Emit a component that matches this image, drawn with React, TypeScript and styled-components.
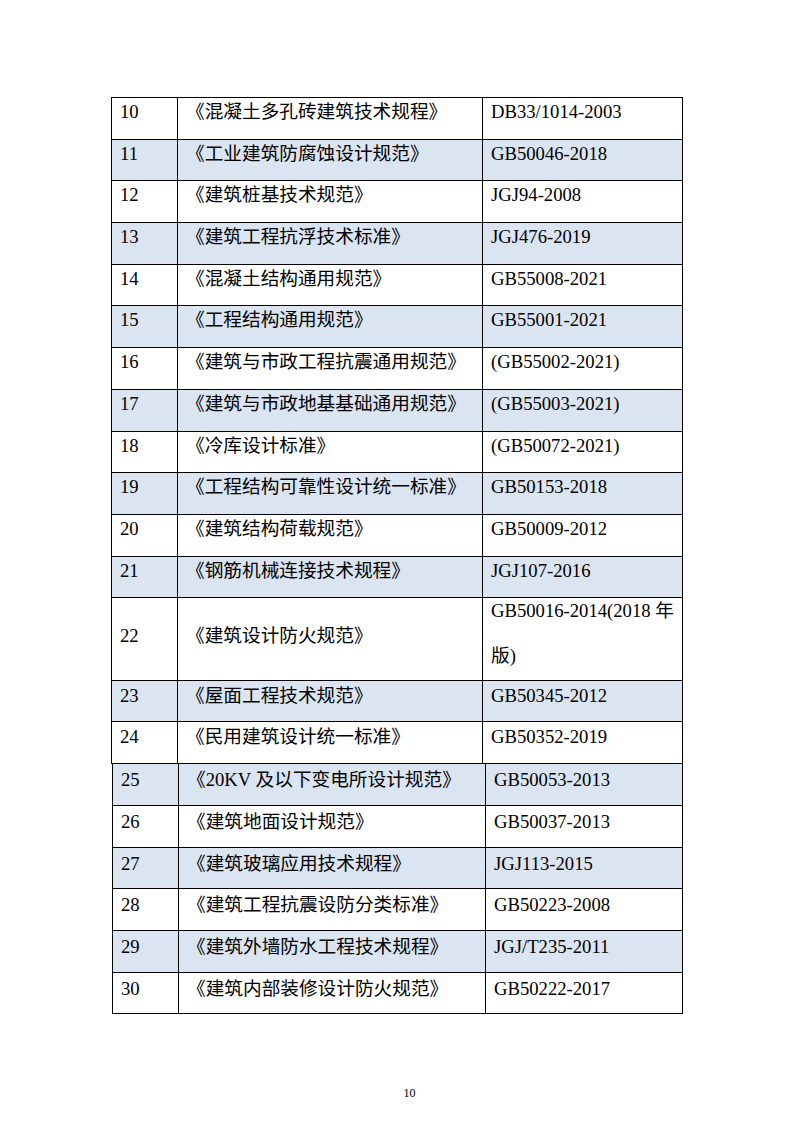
import React from "react"
import styled, { createGlobalStyle } from "styled-components"

const GlobalStyle = createGlobalStyle`
  html, body {
    margin: 0;
    padding: 0;
    background: #fff;
  }
  body {
    font-family: "Liberation Serif", "Noto Sans CJK SC", serif;
    color: #000;
  }
`

type Row = { no: string; name: string; code: string }

const upperRows: Row[] = [
  { no: "10", name: "《混凝土多孔砖建筑技术规程》", code: "DB33/1014-2003" },
  { no: "11", name: "《工业建筑防腐蚀设计规范》", code: "GB50046-2018" },
  { no: "12", name: "《建筑桩基技术规范》", code: "JGJ94-2008" },
  { no: "13", name: "《建筑工程抗浮技术标准》", code: "JGJ476-2019" },
  { no: "14", name: "《混凝土结构通用规范》", code: "GB55008-2021" },
  { no: "15", name: "《工程结构通用规范》", code: "GB55001-2021" },
  { no: "16", name: "《建筑与市政工程抗震通用规范》", code: "(GB55002-2021)" },
  { no: "17", name: "《建筑与市政地基基础通用规范》", code: "(GB55003-2021)" },
  { no: "18", name: "《冷库设计标准》", code: "(GB50072-2021)" },
  { no: "19", name: "《工程结构可靠性设计统一标准》", code: "GB50153-2018" },
  { no: "20", name: "《建筑结构荷载规范》", code: "GB50009-2012" },
  { no: "21", name: "《钢筋机械连接技术规程》", code: "JGJ107-2016" },
  { no: "22", name: "《建筑设计防火规范》", code: "GB50016-2014(2018 年版)" },
  { no: "23", name: "《屋面工程技术规范》", code: "GB50345-2012" },
  { no: "24", name: "《民用建筑设计统一标准》", code: "GB50352-2019" },
]

const lowerRows: Row[] = [
  { no: "25", name: "《20KV 及以下变电所设计规范》", code: "GB50053-2013" },
  { no: "26", name: "《建筑地面设计规范》", code: "GB50037-2013" },
  { no: "27", name: "《建筑玻璃应用技术规程》", code: "JGJ113-2015" },
  { no: "28", name: "《建筑工程抗震设防分类标准》", code: "GB50223-2008" },
  { no: "29", name: "《建筑外墙防水工程技术规程》", code: "JGJ/T235-2011" },
  { no: "30", name: "《建筑内部装修设计防火规范》", code: "GB50222-2017" },
]

const Page = styled.div`
  width: 793px;
  min-height: 1122px;
  padding-top: 97px;
  box-sizing: border-box;
`

const Table = styled.table<{ $shift: number }>`
  border-collapse: collapse;
  table-layout: fixed;
  margin-left: ${(p) => 111 + p.$shift}px;
  margin-top: ${(p) => (p.$shift ? "-1px" : "0")};
  font-size: 18.67px;
  line-height: 21px;
`

const TableRow = styled.tr<{ $shaded: boolean; $tall: boolean }>`
  height: ${(p) => (p.$tall ? "82.5px" : "41.7px")};
  background: ${(p) => (p.$shaded ? "#dbe5f1" : "#fff")};
`

const Cell = styled.td<{ $top: number }>`
  border: 1px solid #000;
  vertical-align: top;
  padding: ${(p) => p.$top}px 8px 0 8px;
  white-space: nowrap;
  overflow: visible;
`

const WrapText = styled.div`
  line-height: 45px;
  margin-top: -13px;
  white-space: normal;
  width: 192px;
`

const Footer = styled.div`
  margin-top: 72px;
  padding-left: 26px;
  text-align: center;
  font-size: 12px;
  line-height: 14px;
`

type TableProps = { rows: Row[]; shift: number; widths: number[]; top: number }

const StandardTable = ({ rows, shift, widths, top }: TableProps) => (
  <Table $shift={shift} style={{ width: widths.reduce((a, b) => a + b, 0) }}>
    <colgroup>
      {widths.map((w, i) => (
        <col key={i} style={{ width: w }} />
      ))}
    </colgroup>
    <tbody>
      {rows.map((r) => {
        const tall = r.no === "22"
        const afterTall = Number(r.no) > 22
        const pad = tall ? 27 : afterTall ? top + 1 : top
        return (
          <TableRow key={r.no} $shaded={Number(r.no) % 2 === 1} $tall={tall}>
            <Cell $top={pad}>{r.no}</Cell>
            <Cell $top={pad}>{r.name}</Cell>
            <Cell $top={tall ? 3 : pad}>{tall ? <WrapText>{r.code}</WrapText> : r.code}</Cell>
          </TableRow>
        )
      })}
    </tbody>
  </Table>
)

export default function App() {
  return (
    <Page>
      <GlobalStyle />
      <StandardTable rows={upperRows} shift={0} widths={[66, 305, 200]} top={3} />
      <StandardTable rows={lowerRows} shift={1} widths={[66, 307, 197]} top={4} />
      <Footer>10</Footer>
    </Page>
  )
}
